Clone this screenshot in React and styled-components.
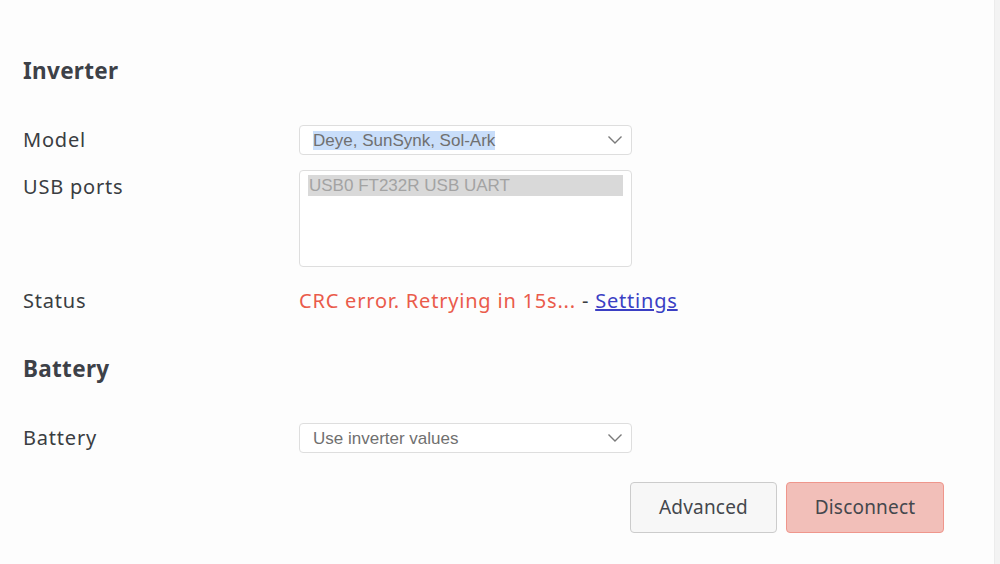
import React from 'react';
import styled, { createGlobalStyle } from 'styled-components';

const GlobalStyle = createGlobalStyle`
  html, body, #root {
    height: 100%;
    margin: 0;
  }
  body {
    background: #fdfdfd;
    font-family: "Noto Sans", "DejaVu Sans", sans-serif;
    color: #3b3e44;
  }
`;

const Page = styled.div`
  display: flex;
  height: 100%;
`;

const Main = styled.main`
  flex: 1;
  padding: 56px 50px 0 23px;
`;

const Track = styled.div`
  width: 5px;
  background: #f3f3f3;
  border-left: 1px solid #ececec;
`;

const Heading = styled.h2`
  margin: 0 0 ${p => p.$after}px;
  margin-top: ${p => p.$before || 0}px;
  font-size: 22.5px;
  line-height: 30px;
  font-weight: 700;
  letter-spacing: 0.3px;
  color: #3d4148;
`;

const Row = styled.div`
  display: grid;
  grid-template-columns: 276px 333px;
  align-items: start;
  margin-top: ${p => p.$top || 0}px;
`;

const Label = styled.div`
  font-size: 20px;
  letter-spacing: 0.8px;
  line-height: ${p => p.$lh || 30}px;
  padding-top: ${p => p.$pt || 0}px;
  color: #3a3d42;
`;

const Select = styled.div`
  height: 30px;
  box-sizing: border-box;
  border: 1px solid #dedede;
  border-radius: 4px;
  background: #fff;
  display: flex;
  align-items: center;
  justify-content: space-between;
  padding: 0 8px 0 13px;
  font-family: "Liberation Sans", Arial, sans-serif;
  font-size: 17px;
  color: #707070;
`;

const Picked = styled.span`
  background: ${p => (p.$focused ? '#c9defa' : 'transparent')};
  line-height: 19px;
`;

const ListBox = styled.div`
  height: 97px;
  box-sizing: border-box;
  border: 1px solid #dedede;
  border-radius: 4px;
  background: #fff;
  padding: 4px 8px 0 8px;
  font-family: "Liberation Sans", Arial, sans-serif;
  font-size: 17px;
`;

const Option = styled.div`
  background: ${p => (p.$selected ? '#d9d9d9' : 'transparent')};
  color: #a3a3a3;
  line-height: 21px;
  padding-left: 1px;
`;

const Status = styled.div`
  font-size: 20px;
  letter-spacing: 0.8px;
  line-height: 36px;
  color: #ea5b4b;
  white-space: nowrap;
`;

const Dash = styled.span`
  color: #3a3d42;
`;

const Link = styled.a`
  color: #3b3fc4;
  text-decoration: underline;
  cursor: pointer;
`;

const Actions = styled.div`
  display: flex;
  justify-content: flex-end;
  gap: 9px;
  margin-top: 29px;
`;

const Button = styled.button`
  height: 51px;
  min-width: ${p => p.$w}px;
  box-sizing: border-box;
  border-radius: 4px;
  border: 1px solid ${p => (p.$danger ? '#ef968c' : '#cccccc')};
  background: ${p => (p.$danger ? '#f2bfb9' : '#f7f7f7')};
  color: #44474d;
  font-family: inherit;
  font-size: 19px;
  letter-spacing: 0.2px;
  padding-bottom: 2px;
  cursor: pointer;
`;

const Chevron = () => (
  <svg width="16" height="10" viewBox="0 0 16 10" fill="none">
    <path d="M1.5 1.5 L8 8 L14.5 1.5" stroke="#7a7a7a" strokeWidth="1.4" />
  </svg>
);

const App = () => {
  return (
    <Page>
      <GlobalStyle />
      <Main>
        <Heading $after={39}>Inverter</Heading>
        <Row>
          <Label>Model</Label>
          <Select>
            <Picked $focused>Deye, SunSynk, Sol-Ark</Picked>
            <Chevron />
          </Select>
        </Row>
        <Row $top={15}>
          <Label $pt={2}>USB ports</Label>
          <ListBox>
            <Option $selected>USB0 FT232R USB UART</Option>
          </ListBox>
        </Row>
        <Row $top={16}>
          <Label $lh={36}>Status</Label>
          <Status>
            CRC error. Retrying in 15s... <Dash>-</Dash> <Link>Settings</Link>
          </Status>
        </Row>
        <Heading $before={35} $after={39}>Battery</Heading>
        <Row>
          <Label>Battery</Label>
          <Select>
            <Picked>Use inverter values</Picked>
            <Chevron />
          </Select>
        </Row>
        <Actions>
          <Button $w={147}>Advanced</Button>
          <Button $w={158} $danger>Disconnect</Button>
        </Actions>
      </Main>
      <Track />
    </Page>
  );
};

export default App;
